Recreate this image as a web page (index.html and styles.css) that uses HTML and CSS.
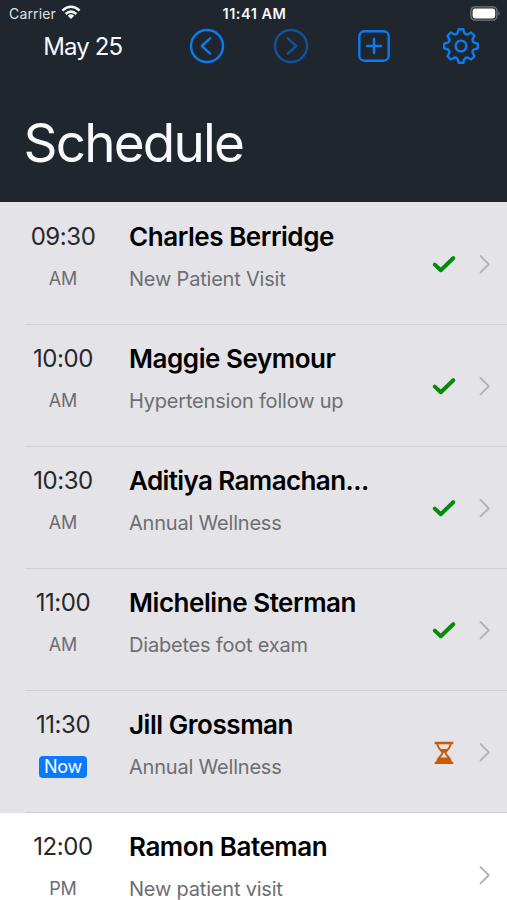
FILE: index.html
```html
<!DOCTYPE html>
<html lang="en">
<head>
<meta charset="utf-8">
<title>Schedule</title>
<link rel="stylesheet" href="styles.css">
</head>
<body>
<svg class="defs" width="0" height="0">
  <symbol id="chevron" viewBox="0 0 12 20"><path d="M1.500 2 9.800 10.200 1.500 18.400" fill="none" stroke="#b3b3b7" stroke-width="1.900" stroke-linecap="round" stroke-linejoin="round"/></symbol>
  <symbol id="check" viewBox="0 0 24 18"><path d="M2.800 9.600 8.800 15.200 21.200 3.200" fill="none" stroke="#078a0b" stroke-width="4" stroke-linecap="round" stroke-linejoin="round"/></symbol>
  <symbol id="hourglass" viewBox="0 0 20 24"><path d="M.7 3H19.300M.7 23H19.300" stroke="#c85a08" stroke-width="2.400"/><path d="M3.200 3.500C3.500 9 8.400 10.500 8.400 13S3.500 17 3.200 22M16.800 3.500C16.500 9 11.600 10.500 11.600 13S16.500 17 16.800 22" fill="none" stroke="#c85a08" stroke-width="1.900"/><path d="M4.800 9H15.200L10 13.200ZM2.800 22.500C3 19.500 4 18 5.500 17.500H14.500C16 18 17 19.500 17.200 22.500Z" fill="#c85a08"/></symbol>
</svg>
<header class="header">
  <div class="status">
    <div class="carrier"><span>Carrier</span>
      <svg width="20" height="15" viewBox="0 0 20 15"><g fill="none" stroke="#f5f6f7" stroke-width="2.500"><path d="M1.400 5.600Q10-2 18.600 5.600"/><path d="M4.600 9Q10 4.200 15.400 9"/></g><path d="M6.800 10.700Q10 7.800 13.200 10.700L10 14Z" fill="#f5f6f7"/></svg>
    </div>
    <div class="clock">11:41 AM</div>
    <svg class="battery" width="31" height="15" viewBox="0 0 31 15"><rect x=".9" y=".9" width="26" height="13.200" rx="4" fill="none" stroke="#74797d" stroke-width="1.300"/><rect x="2.600" y="2.600" width="22.600" height="9.800" rx="2.400" fill="#fff"/><path d="M28.500 5.200Q31 7.500 28.500 9.800Z" fill="#74797d"/></svg>
  </div>
  <nav class="toolbar">
    <div class="date">May 25</div>
    <svg class="tool" viewBox="-20 -20 40 40"><circle r="16"/><path d="M3.100-7.700-5.200 0 3.100 7.700"/></svg>
    <svg class="tool disabled" viewBox="-20 -20 40 40"><circle r="16"/><path d="M-3.100-7.700 5.200 0-3.100 7.700"/></svg>
    <svg class="tool" viewBox="-20 -20 40 40"><rect x="-14.700" y="-14.700" width="29.400" height="29.400" rx="5"/><path d="M-7 0H7M0-7V7"/></svg>
    <svg class="tool" viewBox="-20 -20 40 40"><circle r="5.400"/><path d="M-3.400-13.200-2.300-16.800H2.300L3.400-13.200Q4.500-11 6.930-11.740L10.250-13.510 13.510-10.250 11.740-6.930Q11-4.500 13.200-3.400L16.800-2.300V2.300L13.200 3.400Q11 4.500 11.740 6.930L13.510 10.250 10.250 13.510 6.930 11.740Q4.500 11 3.400 13.200L2.300 16.800H-2.300L-3.400 13.200Q-4.500 11-6.930 11.740L-10.250 13.510-13.510 10.250-11.740 6.930Q-11 4.500-13.200 3.400L-16.800 2.300V-2.300L-13.200-3.400Q-11-4.500-11.740-6.930L-13.510-10.250-10.250-13.510-6.930-11.740Q-4.500-11-3.400-13.200Z"/></svg>
  </nav>
  <h1>Schedule</h1>
</header>
<main class="list">
  <article class="row"><div class="when"><time>09:30</time><span>AM</span></div><div class="body"><div class="text"><h2>Charles Berridge</h2><p>New Patient Visit</p></div><svg class="state"><use href="#check"/></svg><svg class="more"><use href="#chevron"/></svg></div></article>
  <article class="row"><div class="when"><time>10:00</time><span>AM</span></div><div class="body"><div class="text"><h2>Maggie Seymour</h2><p>Hypertension follow up</p></div><svg class="state"><use href="#check"/></svg><svg class="more"><use href="#chevron"/></svg></div></article>
  <article class="row"><div class="when"><time>10:30</time><span>AM</span></div><div class="body"><div class="text"><h2 class="clipped">Aditiya Ramachan...</h2><p>Annual Wellness</p></div><svg class="state"><use href="#check"/></svg><svg class="more"><use href="#chevron"/></svg></div></article>
  <article class="row"><div class="when"><time>11:00</time><span>AM</span></div><div class="body"><div class="text"><h2>Micheline Sterman</h2><p>Diabetes foot exam</p></div><svg class="state"><use href="#check"/></svg><svg class="more"><use href="#chevron"/></svg></div></article>
  <article class="row"><div class="when"><time>11:30</time><span class="now">Now</span></div><div class="body"><div class="text"><h2>Jill Grossman</h2><p>Annual Wellness</p></div><svg class="state"><use href="#hourglass"/></svg><svg class="more"><use href="#chevron"/></svg></div></article>
  <article class="row upcoming"><div class="when"><time>12:00</time><span>PM</span></div><div class="body"><div class="text"><h2>Ramon Bateman</h2><p>New patient visit</p></div><svg class="more"><use href="#chevron"/></svg></div></article>
</main>
</body>
</html>
```
FILE: styles.css
```css
* { box-sizing: border-box; }
body {
  margin: 0;
  height: 900px;
  overflow: hidden;
  background: #fff;
  color: #000;
  font-family: Inter, "Liberation Sans", sans-serif;
}
h1, h2, p { margin: 0; white-space: nowrap; }
.defs { position: absolute; }
.header { height: 202px; background: #1f262d; color: #f7f9fb; }
.status {
  display: grid;
  grid-template-columns: 1fr auto 1fr;
  align-items: center;
  height: 26px;
  padding: 0 6px 0 9px;
  font-size: 14px;
}
.carrier { display: flex; align-items: center; gap: 5px; letter-spacing: .15px; color: #dfe2e4; }
.carrier svg { margin-top: -2px; }
.clock { font-weight: 600; font-size: 14.5px; letter-spacing: .5px; padding-top: 1px; margin-left: -1px; }
.battery { justify-self: end; }
.toolbar {
  display: grid;
  grid-template-columns: 165.5px 83.5px 83.5px 83px 91.5px;
  align-items: center;
  justify-items: center;
  height: 40px;
}
.date { font-size: 24px; letter-spacing: -.85px; }
.tool { width: 40px; height: 40px; fill: none; stroke: #0a7cf0; stroke-width: 2.4; stroke-linecap: round; stroke-linejoin: round; }
.disabled { stroke: #12529a; }
h1 { margin: 44px 0 0 23.5px; font-size: 53px; line-height: 66px; font-weight: 400; letter-spacing: -1.8px; }
.list { padding-top: 1px; background: #e4e3e8; }
.row { position: relative; display: flex; height: 122.1px; }
.upcoming { background: #fff; }
.when { width: 126px; display: flex; flex-direction: column; align-items: center; padding-top: 19px; color: #26282c; }
time { font-size: 24px; line-height: 30px; letter-spacing: -.45px; }
.when span { margin-top: 16px; font-size: 18px; line-height: 22px; letter-spacing: -.2px; color: #6b6d72; }
.when .now { padding: 0 5px; border-radius: 4px; background: #087aff; color: #fff; letter-spacing: -.3px; }
.body { flex: 1; display: flex; align-items: center; padding-right: 16px; }
.text { align-self: stretch; width: 306px; padding: 19px 0 0 3px; }
h2 { font-size: 26px; line-height: 30px; font-weight: 600; letter-spacing: -.45px; }
.clipped { letter-spacing: -.6px; }
p { margin-top: 14px; font-size: 20px; line-height: 26px; letter-spacing: -.2px; color: #6d6e73; }
.state { width: 24px; height: 24px; }
.more { width: 12px; height: 20px; margin-left: auto; }
.row:not(:last-child)::after { content: ""; position: absolute; left: 25px; right: 0; bottom: 0; height: 1px; background: #d0cfd4; }
```
